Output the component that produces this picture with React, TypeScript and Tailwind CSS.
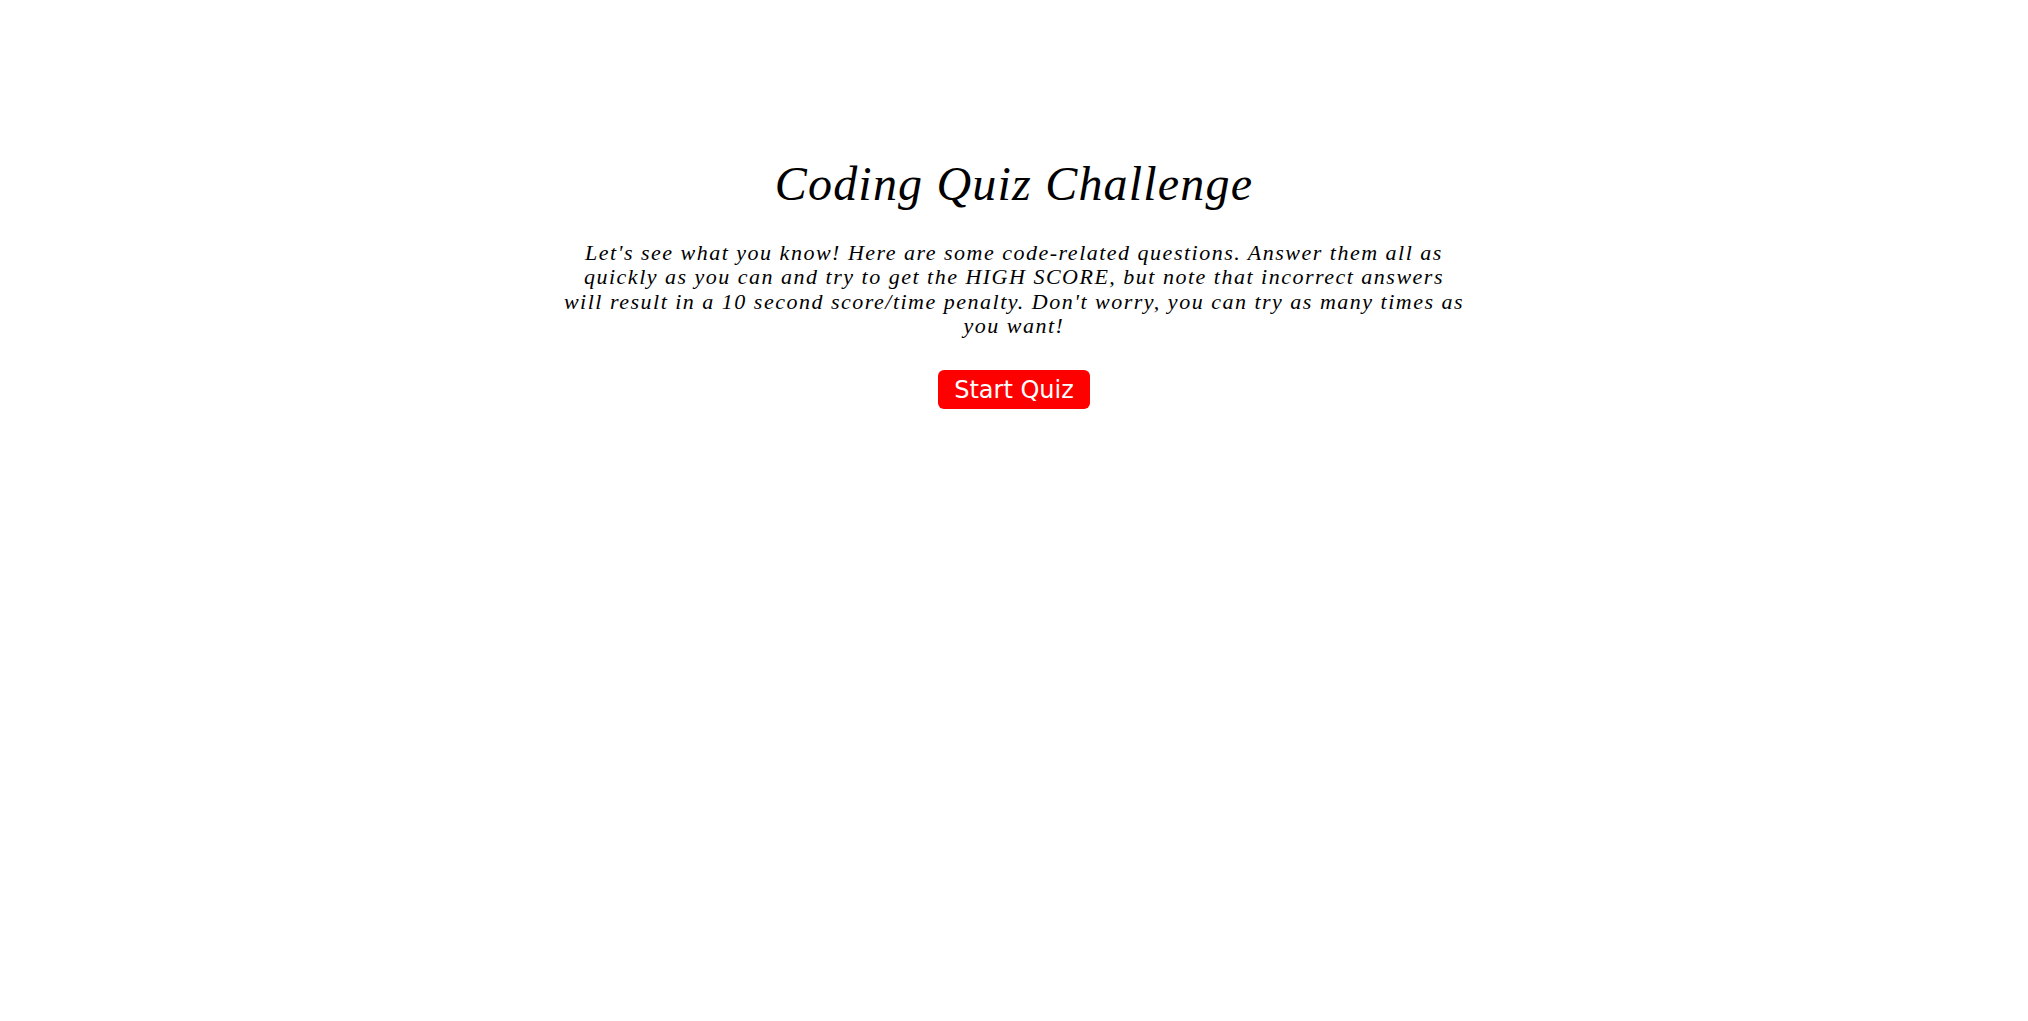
export default function App() {
  return (
    <div className="min-h-screen bg-white text-black">
      <main className="flex flex-col items-center pt-[154px]">
        <h1 className="text-[48px] leading-[60px] italic tracking-[1.2px] font-['Liberation_Serif',serif]">
          Coding Quiz Challenge
        </h1>
        <p className="mt-[27px] w-[930px] text-center text-[22px] leading-[24.3px] italic tracking-[1.5px] font-['Liberation_Serif',serif]">
          Let's see what you know! Here are some code-related questions. Answer them all as
          <br />
          quickly as you can and try to get the HIGH SCORE, but note that incorrect answers
          <br />
          will result in a 10 second score/time penalty. Don't worry, you can try as many times as
          <br />
          you want!
        </p>
        <button className="mt-[32px] h-[39px] px-[16px] rounded-[6px] bg-[#ff0000] text-white text-[24px] font-['DejaVu_Sans',sans-serif]">
          Start Quiz
        </button>
      </main>
    </div>
  );
}
